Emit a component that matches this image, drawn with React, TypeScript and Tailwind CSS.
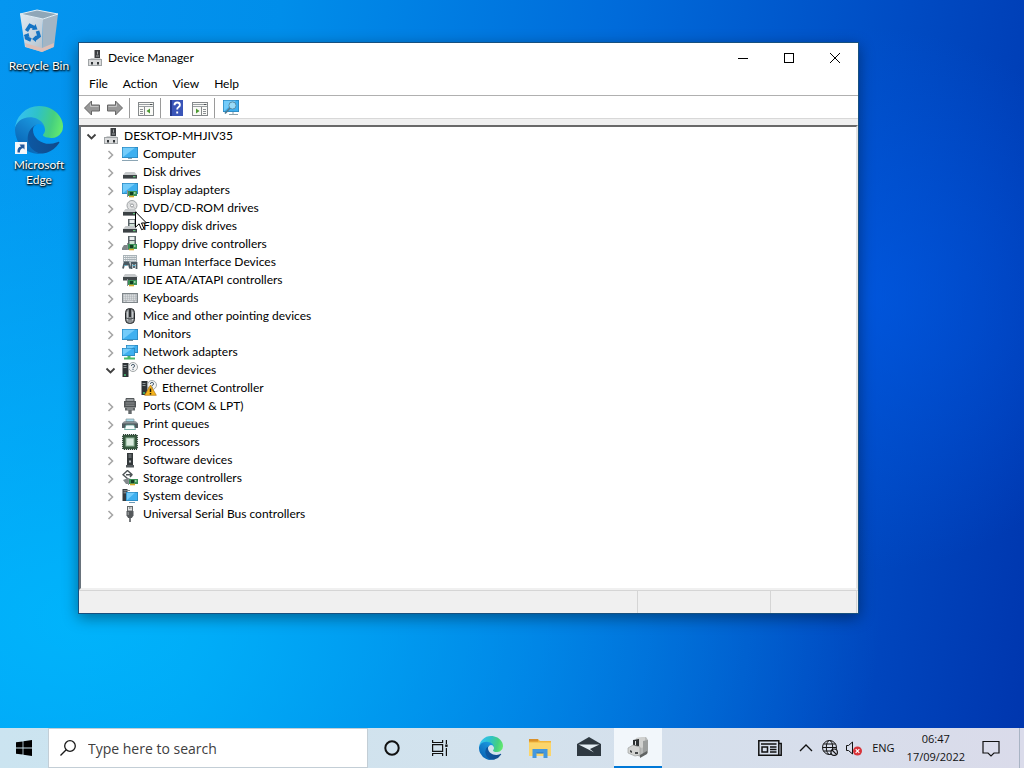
import { useState } from "react";
import type { ReactNode } from "react";

interface DeviceNode {
  name: string;
  icon: ReactNode;
  children?: DeviceNode[];
}

const Svg = ({ children }: { children: ReactNode }) => (
  <svg className="h-4 w-4 shrink-0" viewBox="0 0 16 16" aria-hidden="true">
    {children}
  </svg>
);

const Screen = ({ x = 0, y = 2, w = 16, h = 10 }) => (
  <>
    <rect x={x} y={y} width={w} height={h} fill="#2b86bd" />
    <rect x={x + 0.8} y={y + 0.8} width={w - 1.6} height={h - 1.6} fill="#3fb0f0" />
    <path
      d={`M${x + 0.8} ${y + h - 0.8}V${y + 0.8}H${x + w - 3}z`}
      fill="#74ccfa"
    />
  </>
);

const Chip = ({ x = 7, y = 9 }) => (
  <>
    <rect x={x} y={y} width="9" height="5" fill="#3a8f57" />
    <rect x={x + 2} y={y + 1} width="3" height="3" fill="#123f24" />
    <rect x={x + 6} y={y + 1} width="1.5" height="2" fill="#9ad3a4" />
    <path d={`M${x + 1} ${y + 5.5}h5`} stroke="#d7a928" strokeWidth="1.6" />
    <path d={`M${x - 0.5} ${y - 1}v7`} stroke="#8c9297" />
  </>
);

const Drive = ({ y = 8 }) => (
  <>
    <path d={`M3.5 ${y}h9l2.5 3H1z`} fill="#c6c9cb" />
    <rect x="1" y={y + 3} width="14" height="3.6" fill="#3b4144" />
    <rect x="11" y={y + 4.2} width="2.5" height="1" fill="#6ee08a" />
  </>
);

const Floppy = ({ x = 6, y = 1 }) => (
  <>
    <rect x={x} y={y} width="8" height="8" fill="#5b6469" />
    <rect x={x + 1.5} y={y + 0.8} width="5" height="3.2" fill="#eceff0" />
    <rect x={x + 1.5} y={y + 5} width="5" height="3" fill="#d0e2d6" />
  </>
);

const ComputerIcon = () => (
  <Svg>
    <rect x="7.5" y="0" width="5.5" height="9" fill="#3a3d40" />
    <path d="M10.5 1.5v3M9 6h3" stroke="#9da1a3" />
    <path d="M4 8h9l2 2H2z" fill="#cfd1d2" />
    <rect x="1.5" y="9.5" width="13" height="6" fill="#d9dadb" stroke="#a0a4a6" />
    <path d="M4 12h2v2.500H4zM10 12h2v2.500h-2z" fill="#303437" />
  </Svg>
);

const MonitorIcon = ({ base = false }: { base?: boolean }) => (
  <Svg>
    <Screen y={base ? 1 : 3} h={11} />
    {base ? (
      <path d="M6 12.5h4M0 14.5h16" stroke="#8ba5b4" />
    ) : (
      <path d="M5 14.5h6" stroke="#7f9099" />
    )}
  </Svg>
);

const DiskIcon = () => (
  <Svg>
    <Drive />
  </Svg>
);

const DisplayIcon = () => (
  <Svg>
    <Screen y={1} h={11} />
    <Chip x={6} y={9} />
  </Svg>
);

const DvdIcon = () => (
  <Svg>
    <circle cx="10" cy="5.5" r="5" fill="#dfe0e1" stroke="#a0a4a6" />
    <circle cx="10" cy="5.5" r="1.5" fill="#fff" stroke="#93979a" />
    <path d="M7 2.5l2 2M11.5 7l2 2" stroke="#b5b9bb" />
    <Drive y={9} />
  </Svg>
);

const FloppyDiskIcon = () => (
  <Svg>
    <Floppy />
    <Drive y={8} />
  </Svg>
);

const FloppyControllerIcon = () => (
  <Svg>
    <Floppy y={0} />
    <path d="M2 9h5v5H0v-2z" fill="#7e8588" />
    <Chip x={6} y={8} />
  </Svg>
);

const HidIcon = () => (
  <Svg>
    <rect x="1" y="1" width="14" height="7" fill="#a9b3b8" />
    <path
      d="M2 2.5h12M2 4.5h12M2 6.5h12"
      stroke="#f5f7f8"
      strokeDasharray="1.3 0.8"
    />
    <path
      d="M1 14.5l1.5-6h4l1.5 6M3 10.5h3M9.5 15V9h5v6M12 8v6"
      fill="none"
      stroke="#4b5a62"
      strokeWidth="1.8"
    />
    <path d="M2.5 11.5h2M10.5 11.5h3" stroke="#58b6d4" />
  </Svg>
);

const IdeIcon = () => (
  <Svg>
    <path d="M3 2h10l3 3H1z" fill="#c6c9cb" />
    <rect x="1" y="5" width="14" height="3.5" fill="#42484b" />
    <Chip x={6} y={8} />
  </Svg>
);

const KeyboardIcon = () => (
  <Svg>
    <rect x="0.5" y="3.5" width="15" height="9" fill="#a3a9ad" stroke="#80878b" />
    <path
      d="M1.5 5.2h13M1.5 7.2h13M1.5 9.2h13"
      stroke="#f4f5f6"
      strokeWidth="1.2"
      strokeDasharray="1.4 0.6"
    />
    <path d="M1.5 11.2h2M4.5 11.2h7M12.5 11.2h2" stroke="#f4f5f6" />
  </Svg>
);

const MouseIcon = () => (
  <Svg>
    <rect x="3.5" y="0.5" width="9" height="15" rx="4" fill="#8c9194" stroke="#25282a" />
    <path d="M5.5 3.5v9M10.5 3.5v9" stroke="#c8cbcd" />
    <path d="M8 1v8" stroke="#25282a" strokeWidth="1.8" />
    <path d="M4 10q4 2 8 0" fill="none" stroke="#4c5154" />
  </Svg>
);

const NetworkIcon = () => (
  <Svg>
    <Screen x={4} y={1} w={12} h={8} />
    <Screen x={0} y={4} w={13} h={8} />
    <path d="M2 14.5h11" stroke="#49b968" strokeWidth="2" />
    <path d="M7 12v2" stroke="#49b968" strokeWidth="3" />
  </Svg>
);

const UnknownIcon = ({ warning = false }: { warning?: boolean }) => (
  <Svg>
    <rect x="0.5" y="1" width="6" height="14" fill="#2e3437" />
    <path d="M1.5 3.5h3M1.5 5.5h3" stroke="#8e9799" />
    <path d="M2 13h2" stroke="#49c474" strokeWidth="1.5" />
    <circle cx="11" cy="5" r="4.5" fill="#f3f4f4" stroke="#a3a8aa" />
    <path
      d="M9.4 4q0-1.6 1.6-1.6T12.6 4Q12.6 5 11 5.5v.8M11 7v1"
      fill="none"
      stroke="#4d6273"
    />
    {warning && (
      <>
        <path d="M9.5 5l5.8 10.3H3.7z" fill="#f6b41b" stroke="#b37913" strokeWidth="0.7" />
        <path d="M9.5 8.5v3.5M9.5 13v1.4" stroke="#221b08" strokeWidth="1.5" />
      </>
    )}
  </Svg>
);

const PortIcon = () => (
  <Svg>
    <path d="M4 .5h8v3H4z" fill="#9a9ea0" stroke="#55595b" />
    <path d="M2 3h12v6.5H2z" fill="#505456" />
    <path d="M3.5 5h9M3.5 7.2h9" stroke="#a4a8aa" strokeWidth="0.8" />
    <path d="M3 9.5h10v3H9.7V16H6.300v-3.500H3z" fill="#64696b" />
    <path d="M6 10v2M8 10v2M10 10v2" stroke="#babdbe" strokeWidth="0.8" />
  </Svg>
);

const PrinterIcon = () => (
  <Svg>
    <path d="M4 3h8v3H4z" fill="#a8dbe8" stroke="#8ba0a5" strokeWidth="0.8" />
    <path d="M2 5.5h12l2 2V12H0V7.5z" fill="#525c60" />
    <path d="M1 6.8h14" stroke="#a3acb0" />
    <path d="M4 9h8l1.5 4.5h-11z" fill="#f6fcfb" stroke="#5a9c92" strokeWidth="0.8" />
  </Svg>
);

const CpuIcon = () => (
  <Svg>
    <rect
      x="1"
      y="1"
      width="14"
      height="14"
      fill="#33553f"
      stroke="#2c4336"
      strokeWidth="1.8"
      strokeDasharray="1.2 0.8"
    />
    <rect x="1.3" y="1.3" width="13.4" height="13.4" fill="#37593f" />
    <rect x="4" y="4" width="8" height="8" fill="#dcece0" stroke="#8fb79b" />
  </Svg>
);

const TowerIcon = () => (
  <Svg>
    <path d="M5 1h6v12H5z" fill="#33383a" />
    <path d="M6.5 3h3M6.5 5h3" stroke="#91979a" />
    <rect x="7" y="8.5" width="2" height="2" fill="#b5babc" />
    <path d="M4 13h8v2.5H4z" fill="#545a5d" />
  </Svg>
);

const StorageIcon = () => (
  <Svg>
    <path d="M5.5 0.5L10 4.5M5.5 0.5L1 4.8 6 9M4 4.8h5M8 3l2 1.8L8 7" fill="none" stroke="#4d5356" strokeWidth="1.4" />
    <path d="M1 10l5-2 3 1v5H4z" fill="#81888b" />
    <Chip x={7} y={9} />
  </Svg>
);

const SystemIcon = () => (
  <Svg>
    <rect x="0.5" y="1" width="5" height="12" fill="#343a3e" />
    <path d="M1.5 2.8h3M1.5 4.8h3" stroke="#98a0a4" />
    <path d="M4 2.5h4" stroke="#7d868b" />
    <Screen x={4} y={4} w={12} h={9} />
    <path d="M7 14.5h6" stroke="#6e9ab5" />
  </Svg>
);

const UsbIcon = () => (
  <Svg>
    <rect x="5.5" y="0.5" width="5" height="4.5" fill="#e2e4e5" stroke="#64696b" />
    <path d="M7 2h.8M8.5 2h.8" stroke="#3a3e40" />
    <path d="M4.5 5h7v4.5L9.8 12H6.2L4.5 9.5z" fill="#55595c" />
    <path d="M6.2 6v3" stroke="#a0a4a6" />
    <path d="M8 12v4" stroke="#55595c" strokeWidth="1.6" />
  </Svg>
);

const devices: DeviceNode[] = [
  { name: "Computer", icon: <MonitorIcon base /> },
  { name: "Disk drives", icon: <DiskIcon /> },
  { name: "Display adapters", icon: <DisplayIcon /> },
  { name: "DVD/CD-ROM drives", icon: <DvdIcon /> },
  { name: "Floppy disk drives", icon: <FloppyDiskIcon /> },
  { name: "Floppy drive controllers", icon: <FloppyControllerIcon /> },
  { name: "Human Interface Devices", icon: <HidIcon /> },
  { name: "IDE ATA/ATAPI controllers", icon: <IdeIcon /> },
  { name: "Keyboards", icon: <KeyboardIcon /> },
  { name: "Mice and other pointing devices", icon: <MouseIcon /> },
  { name: "Monitors", icon: <MonitorIcon /> },
  { name: "Network adapters", icon: <NetworkIcon /> },
  {
    name: "Other devices",
    icon: <UnknownIcon />,
    children: [{ name: "Ethernet Controller", icon: <UnknownIcon warning /> }],
  },
  { name: "Ports (COM & LPT)", icon: <PortIcon /> },
  { name: "Print queues", icon: <PrinterIcon /> },
  { name: "Processors", icon: <CpuIcon /> },
  { name: "Software devices", icon: <TowerIcon /> },
  { name: "Storage controllers", icon: <StorageIcon /> },
  { name: "System devices", icon: <SystemIcon /> },
  { name: "Universal Serial Bus controllers", icon: <UsbIcon /> },
];

const menus = ["File", "Action", "View", "Help"];

const TreeRow = ({
  node,
  open,
  leaf = false,
  onToggle,
}: {
  node: DeviceNode;
  open: boolean;
  leaf?: boolean;
  onToggle?: () => void;
}) => (
  <div className="flex h-[18px] items-center">
    {leaf ? (
      <span className="w-4" />
    ) : (
      <button
        type="button"
        onClick={onToggle}
        aria-label={open ? `Collapse ${node.name}` : `Expand ${node.name}`}
        className="flex h-4 w-4 items-center justify-center"
      >
        <svg className="h-3 w-3" viewBox="0 0 12 12" fill="none">
          {open ? (
            <path d="M1.5 4.5l4 4 4-4" stroke="#404040" strokeWidth="1.8" />
          ) : (
            <path d="M3.5 3l4 4-4 4" stroke="#a6a6a6" strokeWidth="1.6" />
          )}
        </svg>
      </button>
    )}
    <span className="ml-[3px] flex">{node.icon}</span>
    <span className="ml-[5px] whitespace-nowrap">{node.name}</span>
  </div>
);

const DeviceTree = () => {
  const [rootOpen, setRootOpen] = useState(true);
  const [expanded, setExpanded] = useState<string[]>(["Other devices"]);

  const toggle = (name: string) => {
    setExpanded((prev) =>
      prev.includes(name) ? prev.filter((n) => n !== name) : [...prev, name]
    );
  };

  return (
    <div className="min-h-[465px] border-2 border-b-[#f0f0f0] border-l-[#69737c] border-r-[#e3e3e3] border-t-[#696969] bg-white pb-16 pl-[3px]">
      <TreeRow
        node={{ name: "DESKTOP-MHJIV35", icon: <ComputerIcon /> }}
        open={rootOpen}
        onToggle={() => setRootOpen(!rootOpen)}
      />
      {rootOpen && (
        <ul className="pl-[19px]">
          {devices.map((device) => {
            const open = expanded.includes(device.name);
            return (
              <li key={device.name}>
                <TreeRow node={device} open={open} onToggle={() => toggle(device.name)} />
                {open && device.children && (
                  <ul className="pl-[19px]">
                    {device.children.map((child) => (
                      <li key={child.name}>
                        <TreeRow node={child} open={false} leaf />
                      </li>
                    ))}
                  </ul>
                )}
              </li>
            );
          })}
        </ul>
      )}
    </div>
  );
};

const Arrow = ({ flip = false }: { flip?: boolean }) => (
  <svg className="h-4 w-4" viewBox="0 0 16 16">
    <path
      d={
        flip
          ? "M15.5 8L8.5 1v4H.5v6h8v4z"
          : "M.5 8l7-7v4h8v6h-8v4z"
      }
      fill="#989898"
      stroke="#666"
    />
    <path d={flip ? "M1.5 6.5h8v-3" : "M14.5 6.5h-8v-3"} fill="none" stroke="#c4c4c4" />
  </svg>
);

const Pane = ({ play = false }: { play?: boolean }) => (
  <svg className="h-4 w-4" viewBox="0 0 16 16">
    <rect x="0.5" y="2.5" width="15" height="13" fill="#fafaf7" stroke="#85898b" />
    <path d="M1 4.5h14M1 6.5h14" stroke="#9ba0a3" />
    <path d="M12 4.5h2" stroke="#4b4f52" />
    {play ? (
      <>
        <path d="M9.5 7v8" stroke="#85898b" />
        <path d="M4 8.5v5l3.5-2.5z" fill="#4c9a32" />
        <path d="M11 9.5h3M11 11.5h3M11 13.5h3" stroke="#8b9093" />
      </>
    ) : (
      <>
        <path d="M6.5 7v8" stroke="#85898b" />
        <path d="M12 8.5v5L8.5 11z" fill="#4c9a32" />
        <path d="M2 9.5h3M2 11.5h3M2 13.5h3" stroke="#8b9093" />
      </>
    )}
  </svg>
);

const Toolbar = () => (
  <div className="flex h-[22px] items-center pl-[5px] pt-0.5">
    <button type="button" aria-label="Back">
      <Arrow />
    </button>
    <button type="button" aria-label="Forward" className="ml-[7px]">
      <Arrow flip />
    </button>
    <span className="ml-1.5 h-5 w-px bg-[#9a9a9a]" />
    <button type="button" aria-label="Show console tree" className="ml-2">
      <Pane />
    </button>
    <span className="ml-1.5 h-5 w-px bg-[#9a9a9a]" />
    <button type="button" aria-label="Help topics" className="ml-2">
      <svg className="h-4 w-4" viewBox="0 0 16 16">
        <rect x="1" y="0" width="13" height="16" fill="#3a55b8" />
        <path d="M2 0v16" stroke="#23378c" strokeWidth="2" />
        <path
          d="M5.5 5.2q0-2.7 2.7-2.7t2.7 2.5q0 1.4-1.5 2.2-1.2.7-1.2 2.3M8.2 11.5v2"
          fill="none"
          stroke="#fff"
          strokeWidth="1.9"
        />
      </svg>
    </button>
    <button type="button" aria-label="Show action pane" className="ml-[7px]">
      <Pane play />
    </button>
    <span className="ml-1.5 h-5 w-px bg-[#9a9a9a]" />
    <button type="button" aria-label="Scan for hardware changes" className="ml-2">
      <svg className="h-4 w-4" viewBox="0 0 16 16">
        <Screen x={0} y={0} w={16} h={12} />
        <circle cx="9.5" cy="5.5" r="3.6" fill="#9bdcf8" stroke="#5b8fa8" />
        <path d="M7 8l-5 5.5" stroke="#4d7b93" strokeWidth="1.8" />
        <path d="M6 14.5h9" stroke="#8aa0aa" />
        <path d="M10 12v2" stroke="#8aa0aa" />
      </svg>
    </button>
  </div>
);

const DeviceManagerWindow = () => (
  <section
    aria-label="Device Manager"
    className="absolute left-[78px] right-[165px] top-[42px] flex flex-col border border-[#17507f] bg-white text-xs text-black shadow-[0_4px_14px_rgba(0,0,0,0.4)]"
  >
    <header className="flex h-[30px] items-center pl-2">
      <ComputerIcon />
      <h1 className="ml-[5px] flex-1">Device Manager</h1>
      <button type="button" aria-label="Minimize" className="flex h-[30px] w-[46px] items-center justify-center">
        <svg className="h-2.5 w-2.5" viewBox="0 0 10 10" stroke="#000">
          <path d="M0 5.5h10" />
        </svg>
      </button>
      <button type="button" aria-label="Maximize" className="flex h-[30px] w-[46px] items-center justify-center">
        <svg className="h-2.5 w-2.5" viewBox="0 0 10 10" fill="none" stroke="#000">
          <rect x="0.5" y="0.5" width="9" height="9" />
        </svg>
      </button>
      <button type="button" aria-label="Close" className="flex h-[30px] w-[46px] items-center justify-center">
        <svg className="h-2.5 w-2.5" viewBox="0 0 10 10" stroke="#000">
          <path d="M0 0l10 10M10 0L0 10" />
        </svg>
      </button>
    </header>
    <nav className="flex h-[23px] items-center gap-[15px] border-b border-[#b0b0b0] pl-2.5">
      {menus.map((menu) => (
        <button key={menu} type="button">
          {menu}
        </button>
      ))}
    </nav>
    <Toolbar />
    <div className="h-[7px] border-t border-[#d8d8d8] bg-[#f0f0f0]" />
    <DeviceTree />
    <footer className="flex h-[23px] border-t border-[#d5d5d5] bg-[#f0f0f0] pr-px">
      <span className="flex-1 border-r border-[#d5d5d5]" />
      <span className="w-[133px] border-r border-[#d5d5d5]" />
      <span className="w-[86px] border-r border-[#d5d5d5]" />
    </footer>
  </section>
);

const EdgeLogo = ({ id, className }: { id: string; className: string }) => (
  <svg className={className} viewBox="0 0 256 256" aria-hidden="true">
    <defs>
      <linearGradient id={`${id}-a`} x1="60" y1="177" x2="237" y2="177" gradientUnits="userSpaceOnUse">
        <stop offset="0" stopColor="#0c59a4" />
        <stop offset="1" stopColor="#114a8b" />
      </linearGradient>
      <linearGradient id={`${id}-b`} x1="150" y1="80" x2="45" y2="225" gradientUnits="userSpaceOnUse">
        <stop offset="0" stopColor="#1b9de2" />
        <stop offset="0.5" stopColor="#1480cc" />
        <stop offset="1" stopColor="#0868b8" />
      </linearGradient>
      <linearGradient id={`${id}-c`} x1="10" y1="70" x2="250" y2="130" gradientUnits="userSpaceOnUse">
        <stop offset="0" stopColor="#35c1f1" />
        <stop offset="0.4" stopColor="#2fc2c8" />
        <stop offset="0.75" stopColor="#45cf80" />
        <stop offset="1" stopColor="#66eb6e" />
      </linearGradient>
    </defs>
    <path
      fill={`url(#${id}-a)`}
      d="M231.07 190.54c-3.41 1.78-6.93 3.37-10.53 4.76a101.9 101.9 0 0 1-35.94 6.46c-47.37 0-88.63-32.58-88.63-74.4a31.42 31.42 0 0 1 16.43-27.31c-42.8 1.8-53.8 46.4-53.8 72.53 0 73.88 68.09 81.37 82.76 81.37 7.91 0 19.84-2.3 27-4.56l1.31-.44a128.34 128.34 0 0 0 66.6-52.8 4 4 0 0 0-5.2-5.61z"
    />
    <path
      fill={`url(#${id}-b)`}
      d="M105.73 241.42a79.2 79.2 0 0 1-22.74-21.34 80.72 80.72 0 0 1 29.41-120.03c3.12-1.47 8.45-4.13 15.54-4a32.35 32.35 0 0 1 25.69 13 31.88 31.88 0 0 1 6.36 18.66c0-.21 24.46-79.6-80-79.6-43.9 0-80 41.66-80 78.21a130.15 130.15 0 0 0 12.11 56 128 128 0 0 0 156.38 67.11 75.55 75.55 0 0 1-62.78-8z"
    />
    <path
      fill={`url(#${id}-c)`}
      d="M152.3 148.86c-.81 1.05-3.3 2.5-3.3 5.66 0 2.61 1.7 5.12 4.72 7.23 14.38 10 41.49 8.68 41.56 8.68a59.56 59.56 0 0 0 30.27-8.35A61.38 61.38 0 0 0 256 109.19c.26-22.41-8-37.31-11.34-43.91C223.46 23.84 177.72 0 128 0A128 128 0 0 0 0 126.2c.48-36.54 36.8-66.05 80-66.05 3.5 0 23.46.34 42 10.07 16.34 8.58 24.9 18.94 30.85 29.21 6.18 10.67 7.28 24.15 7.28 29.52s-2.74 13.33-7.83 19.91z"
    />
  </svg>
);

const RecycleBin = () => (
  <svg className="h-12 w-12" viewBox="0 0 48 48" aria-hidden="true">
    <defs>
      <linearGradient id="bin" x1="0" y1="0" x2="1" y2="1">
        <stop offset="0" stopColor="#dde8f0" />
        <stop offset="0.6" stopColor="#c6d3de" />
        <stop offset="1" stopColor="#b4bfc9" />
      </linearGradient>
    </defs>
    <path d="M5 7l23 5-1 33L10 40z" fill="url(#bin)" />
    <path d="M28 12l15-5-4 33-12 5z" fill="#a3b5c4" />
    <path d="M5 7l17-4 21 4-15 5z" fill="#8fa7b8" stroke="#e3edf3" />
    <path d="M10 36l17 5 12-5-.5 4L27 45l-16-5z" fill="#dcbfb8" />
    <path
      d="M11.500 24l3.500-5.500 5 2.500M22.500 24l1.500 5-4 3M16 33l-4.500-2-.5-3.500"
      fill="none"
      stroke="#1474c4"
      strokeWidth="3.600"
    />
    <path d="M20.500 17l2 5.500-5.500.5zM21 28.500l-4 3.500 4 3zM8.500 28.500l5-2.500 1 4z" fill="#1474c4" />
  </svg>
);

const DesktopButton = ({ children }: { children: ReactNode }) => (
  <button
    type="button"
    className="flex flex-col items-center gap-[3px] text-xs leading-[15px] text-white [text-shadow:0_1px_2px_#000,1px_1px_2px_#000]"
  >
    {children}
  </button>
);

const DesktopIcons = () => (
  <div className="flex w-[78px] flex-col gap-[33px] pt-[7px] text-center">
    <DesktopButton>
      <RecycleBin />
      <span className="whitespace-nowrap">Recycle Bin</span>
    </DesktopButton>
    <DesktopButton>
      <span className="relative">
        <EdgeLogo id="desk" className="h-12 w-12" />
        <svg className="absolute bottom-0 left-0 h-3 w-3" viewBox="0 0 12 12">
          <rect width="12" height="12" fill="#f4f7fa" />
          <path d="M2.5 10.5q-.5-5.5 3.5-6L4.5 2.5h5v5L8 6Q4.5 7 5 10.5z" fill="#22599c" />
        </svg>
      </span>
      <span>
        Microsoft
        <br />
        Edge
      </span>
    </DesktopButton>
  </div>
);

const TaskButton = ({ label, children }: { label: string; children: ReactNode }) => (
  <button type="button" aria-label={label} className="flex h-10 w-12 items-center justify-center">
    {children}
  </button>
);

const Taskbar = () => {
  const [query, setQuery] = useState("");

  return (
    <footer className="flex h-10 items-center bg-linear-to-r from-[#cbe4f0] via-[#d3e2ed] to-[#dadbea] font-['Open_Sans','Noto_Sans',sans-serif] text-[#111]">
      <TaskButton label="Start">
        <svg className="h-4 w-4" viewBox="0 0 16 16">
          <path d="M0 2.3L6.6 1.4V7.6H0zM7.4 1.3L16 0v7.6H7.4zM0 8.4h6.6v6.2L0 13.7zM7.4 8.4H16V16l-8.6-1.3z" />
        </svg>
      </TaskButton>
      <label className="flex h-10 w-80 items-center border border-[#c3ced6] bg-white pl-[11px]">
        <svg className="h-4 w-4" viewBox="0 0 16 16" fill="none" stroke="#1a1a1a" strokeWidth="1.3">
          <circle cx="10" cy="6" r="5.3" />
          <path d="M6.2 9.8L.5 15.5" />
        </svg>
        <input
          type="text"
          aria-label="Type here to search"
          placeholder="Type here to search"
          value={query}
          onChange={(e) => setQuery(e.target.value)}
          className="ml-3 min-w-0 flex-1 pt-0.5 text-sm outline-none placeholder:text-[#404040]"
        />
      </label>
      <TaskButton label="Cortana">
        <svg className="h-4 w-4" viewBox="0 0 16 16" fill="none" stroke="#111" strokeWidth="2">
          <circle cx="8" cy="8" r="6.7" />
        </svg>
      </TaskButton>
      <TaskButton label="Task View">
        <svg className="h-4 w-4" viewBox="0 0 16 16" fill="none" stroke="#111" strokeWidth="1.2">
          <path d="M.6 0v2.5h10V0M.6 16v-2.5h10V16M.6 4.6h10v6.8H.6zM14.4 0v4M14.4 8v8" />
          <rect x="13.2" y="4.5" width="2.4" height="2.4" fill="#111" stroke="none" />
        </svg>
      </TaskButton>
      <div className="ml-[3px] flex gap-px">
        <TaskButton label="Microsoft Edge">
          <EdgeLogo id="task" className="h-6 w-6" />
        </TaskButton>
        <TaskButton label="File Explorer">
          <svg className="h-6 w-6" viewBox="0 0 24 24">
            <path d="M1 3h9l2 2h11v15H1z" fill="#f2b63c" />
            <path d="M1 3h9v2.5H1z" fill="#d9902a" />
            <path d="M1 6.5h22V20H1z" fill="#fbd56b" />
            <path d="M4.5 13h15v9h-4v-5h-7v5h-4z" fill="#4398de" />
            <path d="M8.5 17h7" stroke="#2573b8" />
          </svg>
        </TaskButton>
        <TaskButton label="Mail">
          <svg className="h-6 w-6" viewBox="0 0 24 24">
            <path d="M0 8l12-7 12 7v12H0z" fill="#2f3941" />
            <path d="M1.5 8.5h21L13 13l4 3.5-6.5-3.5z" fill="#e4edf3" />
          </svg>
        </TaskButton>
        <button
          type="button"
          aria-label="Device Manager"
          className="flex h-10 w-12 items-center justify-center border-b-2 border-[#0078d7] bg-[#f2f7fb]"
        >
          <svg className="h-6 w-6" viewBox="0 0 24 24">
            <path d="M10 3l10-1 2 3v13l-8 4-6-3z" fill="#b9bbba" />
            <path d="M10 3l9-1v10l-9 2z" fill="#d0d1cf" />
            <path d="M17 6l5-1v13l-5 2z" fill="#9c9f9e" />
            <path d="M7 5l6-1v7l-6 2z" fill="#2d3132" />
            <path d="M9.5 6v4" stroke="#dfe1e1" />
            <path d="M2 13l5-3 7 2v8l-5 1-7-3z" fill="#d3d4d2" stroke="#949796" strokeWidth="0.6" />
            <path d="M4 15l2 1v2l-2-1zM9 17h3v2H9z" fill="#454949" />
            <path d="M14 20l7-4v3l-7 4z" fill="#606463" />
          </svg>
        </button>
      </div>
      <div className="ml-auto flex h-10 items-center text-[11px]">
        <button type="button" aria-label="News and interests" className="mr-4">
          <svg className="h-6 w-6" viewBox="0 0 24 24" fill="none" stroke="#111" strokeWidth="1.5">
            <path d="M.8 4.8h20v14.4h-20zM20.8 7.5h2.4v11.7h-3M3 8h15.5" />
            <path d="M4 11h5.5v5H4zM12 11h6.5M12 13.5h6.5M12 16h6.5" />
          </svg>
        </button>
        <button type="button" aria-label="Show hidden icons">
          <svg className="h-4 w-4" viewBox="0 0 16 16" fill="none" stroke="#111" strokeWidth="1.3">
            <path d="M2 11l6-6 6 6" />
          </svg>
        </button>
        <button type="button" aria-label="Network" className="ml-2">
          <svg className="h-4 w-4" viewBox="0 0 16 16" fill="none" stroke="#111">
            <circle cx="7.5" cy="7.5" r="7" />
            <ellipse cx="7.5" cy="7.5" rx="3.2" ry="7" />
            <path d="M.5 7.5h14M1.5 4h12M1.5 11h8" />
            <circle cx="12.2" cy="12.2" r="3.2" fill="#d8dce9" strokeWidth="1.2" />
            <path d="M10 10l4.4 4.4" strokeWidth="1.2" />
          </svg>
        </button>
        <button type="button" aria-label="Volume" className="ml-2">
          <svg className="h-4 w-4" viewBox="0 0 16 16">
            <path d="M.5 5.5h2L6.5 2v12l-4-3.5h-2z" fill="none" stroke="#111" />
            <circle cx="11.5" cy="11" r="4.5" fill="#d8343a" />
            <path d="M9.7 9.2l3.6 3.6M13.3 9.2l-3.6 3.6" stroke="#fff" strokeWidth="1.2" />
          </svg>
        </button>
        <button type="button" className="ml-2.5">
          ENG
        </button>
        <button type="button" className="ml-3 text-center leading-[18px]">
          06:47
          <br />
          17/09/2022
        </button>
        <button type="button" aria-label="Notifications" className="ml-4">
          <svg className="h-5 w-5" viewBox="0 0 20 20" fill="none" stroke="#111" strokeWidth="1.2">
            <path d="M2 3.5h16v11.5h-5l-3 3-3-3H2z" />
          </svg>
        </button>
        <span className="ml-[18px] mr-1 h-10 w-px bg-[#a9b4c4]" />
      </div>
    </footer>
  );
};

export default function App() {
  return (
    <div className="flex min-h-screen flex-col font-[Lato,'Open_Sans',sans-serif]">
      <main className="relative flex-1 bg-[radial-gradient(circle_at_85%_41%,rgba(0,92,235,0.6),rgba(0,92,235,0)_28%),radial-gradient(ellipse_at_8%_85%,rgba(0,188,255,0.8),rgba(0,188,255,0)_60%),linear-gradient(98deg,#0596f0_0%,#008eea_25%,#006bda_55%,#004cc4_80%,#0036ae_100%)]">
        <DesktopIcons />
        <DeviceManagerWindow />
        <svg className="absolute left-[135px] top-[211px] h-5 w-3" viewBox="0 0 12 20" aria-hidden="true">
          <path d="M.5 .8v15.500l3.600-3.500 2.500 5.900 2.400-1-2.500-5.700h5z" fill="#fff" stroke="#000" />
        </svg>
      </main>
      <Taskbar />
    </div>
  );
}
